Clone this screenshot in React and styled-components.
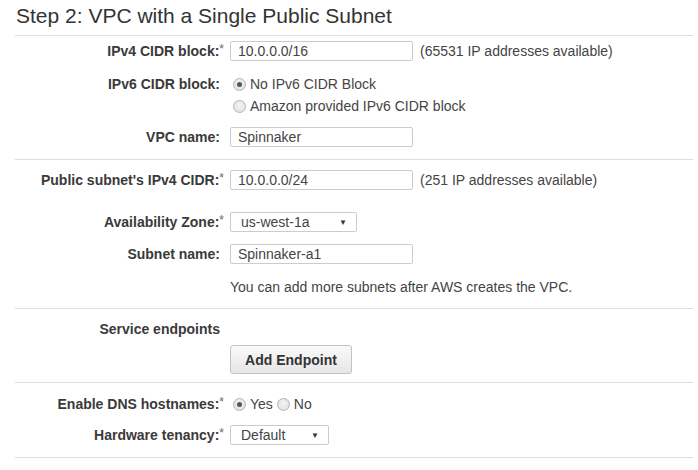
import React from 'react'
import styled, { createGlobalStyle } from 'styled-components'

const GlobalStyle = createGlobalStyle`
  body {
    margin: 0;
    background: #fff;
    font-family: "Liberation Sans", Arial, sans-serif;
    font-size: 14px;
    color: #444;
  }
`

const Page = styled.div`
  width: 698px;
  padding: 0 5px 0 15px;
  box-sizing: border-box;
`

const Title = styled.h2`
  margin: 0;
  padding: 5px 0 0 1px;
  height: 36px;
  box-sizing: border-box;
  font-size: 21px;
  font-weight: normal;
  color: #333;
  line-height: 22px;
  border-bottom: 1px solid #ddd;
`

const Section = styled.div`
  display: flex;
  flex-direction: column;
  gap: ${p => p.gap || 10}px;
  padding: ${p => p.pad};
  border-bottom: 1px solid #ddd;
`

const Row = styled.div`
  display: grid;
  grid-template-columns: 205px 1fr;
  column-gap: 10px;
  align-items: ${p => (p.top ? 'start' : 'center')};
  margin-top: ${p => p.push || 0}px;
`

const Label = styled.div`
  text-align: right;
  font-weight: bold;
  color: #3a3a3a;
  line-height: ${p => p.lh || 20}px;
  white-space: nowrap;
`

const Star = styled.span`
  font-weight: normal;
  color: #666;
  font-size: 12px;
  vertical-align: top;
  line-height: 16px;
  margin-right: -4px;
`

const Control = styled.div`
  display: flex;
  flex-direction: ${p => (p.column ? 'column' : 'row')};
  align-items: ${p => (p.column ? 'flex-start' : 'center')};
  min-height: 20px;
`

const TextBox = styled.input`
  width: 183px;
  height: 20px;
  box-sizing: border-box;
  border: 1px solid #ccc;
  border-radius: 2px;
  padding: 0 7px;
  font-family: inherit;
  font-size: 14px;
  color: #444;
  outline: none;
`

const Hint = styled.span`
  margin-left: 7px;
  color: #444;
`

const Note = styled.div`
  line-height: 20px;
  color: #444;
`

const Select = styled.div`
  width: ${p => p.w}px;
  height: 20px;
  box-sizing: border-box;
  border: 1px solid #ccc;
  border-radius: 2px;
  padding: 0 9px 0 10px;
  display: flex;
  align-items: center;
  justify-content: space-between;
  color: #444;
  &::after {
    content: '▼';
    font-size: 8px;
    color: #333;
  }
`

const RadioLine = styled.label`
  display: flex;
  align-items: center;
  height: 22px;
  margin-right: 1px;
  color: #444;
`

const Dot = styled.span`
  width: 11px;
  height: 11px;
  border-radius: 50%;
  border: 1px solid #b5b5b5;
  background: radial-gradient(circle at 50% 40%, #f4f4f4 0%, #dcdcdc 100%);
  margin: 0 4px 0 3px;
  display: inline-flex;
  align-items: center;
  justify-content: center;
  &::after {
    content: '';
    width: 5px;
    height: 5px;
    border-radius: 50%;
    background: ${p => (p.on ? '#555' : 'transparent')};
  }
`

const Button = styled.button`
  width: 122px;
  height: 29px;
  border: 1px solid #c2c2c2;
  border-radius: 3px;
  background: linear-gradient(#fafafa, #e6e6e6);
  font-family: inherit;
  font-size: 14px;
  font-weight: bold;
  color: #333;
  padding: 0;
`

const Radio = ({ on, children }) => (
  <RadioLine>
    <Dot on={on} />
    {children}
  </RadioLine>
)

export default function App() {
  return (
    <Page>
      <GlobalStyle />
      <Title>Step 2: VPC with a Single Public Subnet</Title>

      <Section pad="5px 0 12px" gap={12}>
        <Row>
          <Label>IPv4 CIDR block:<Star>*</Star></Label>
          <Control>
            <TextBox readOnly value="10.0.0.0/16" />
            <Hint>(65531 IP addresses available)</Hint>
          </Control>
        </Row>
        <Row top>
          <Label lh={22}>IPv6 CIDR block:</Label>
          <Control column>
            <Radio on>No IPv6 CIDR Block</Radio>
            <Radio>Amazon provided IPv6 CIDR block</Radio>
          </Control>
        </Row>
        <Row push={-2}>
          <Label>VPC name:</Label>
          <Control>
            <TextBox readOnly value="Spinnaker" />
          </Control>
        </Row>
      </Section>

      <Section pad="10px 0 11px" gap={12}>
        <Row>
          <Label>Public subnet's IPv4 CIDR:<Star>*</Star></Label>
          <Control>
            <TextBox readOnly value="10.0.0.0/24" />
            <Hint>(251 IP addresses available)</Hint>
          </Control>
        </Row>
        <Row push={10}>
          <Label>Availability Zone:<Star>*</Star></Label>
          <Control>
            <Select w={127}>us-west-1a</Select>
          </Control>
        </Row>
        <Row>
          <Label>Subnet name:</Label>
          <Control>
            <TextBox readOnly value="Spinnaker-a1" />
          </Control>
        </Row>
        <Row push={1}>
          <Label />
          <Note>You can add more subnets after AWS creates the VPC.</Note>
        </Row>
      </Section>

      <Section pad="10px 0 8px" gap={6}>
        <Row>
          <Label>Service endpoints</Label>
          <Control />
        </Row>
        <Row>
          <Label />
          <Control>
            <Button type="button">Add Endpoint</Button>
          </Control>
        </Row>
      </Section>

      <Section pad="10px 0 12px" gap={10}>
        <Row>
          <Label>Enable DNS hostnames:<Star>*</Star></Label>
          <Control>
            <Radio on>Yes</Radio>
            <Radio>No</Radio>
          </Control>
        </Row>
        <Row>
          <Label>Hardware tenancy:<Star>*</Star></Label>
          <Control>
            <Select w={99}>Default</Select>
          </Control>
        </Row>
      </Section>
    </Page>
  )
}
